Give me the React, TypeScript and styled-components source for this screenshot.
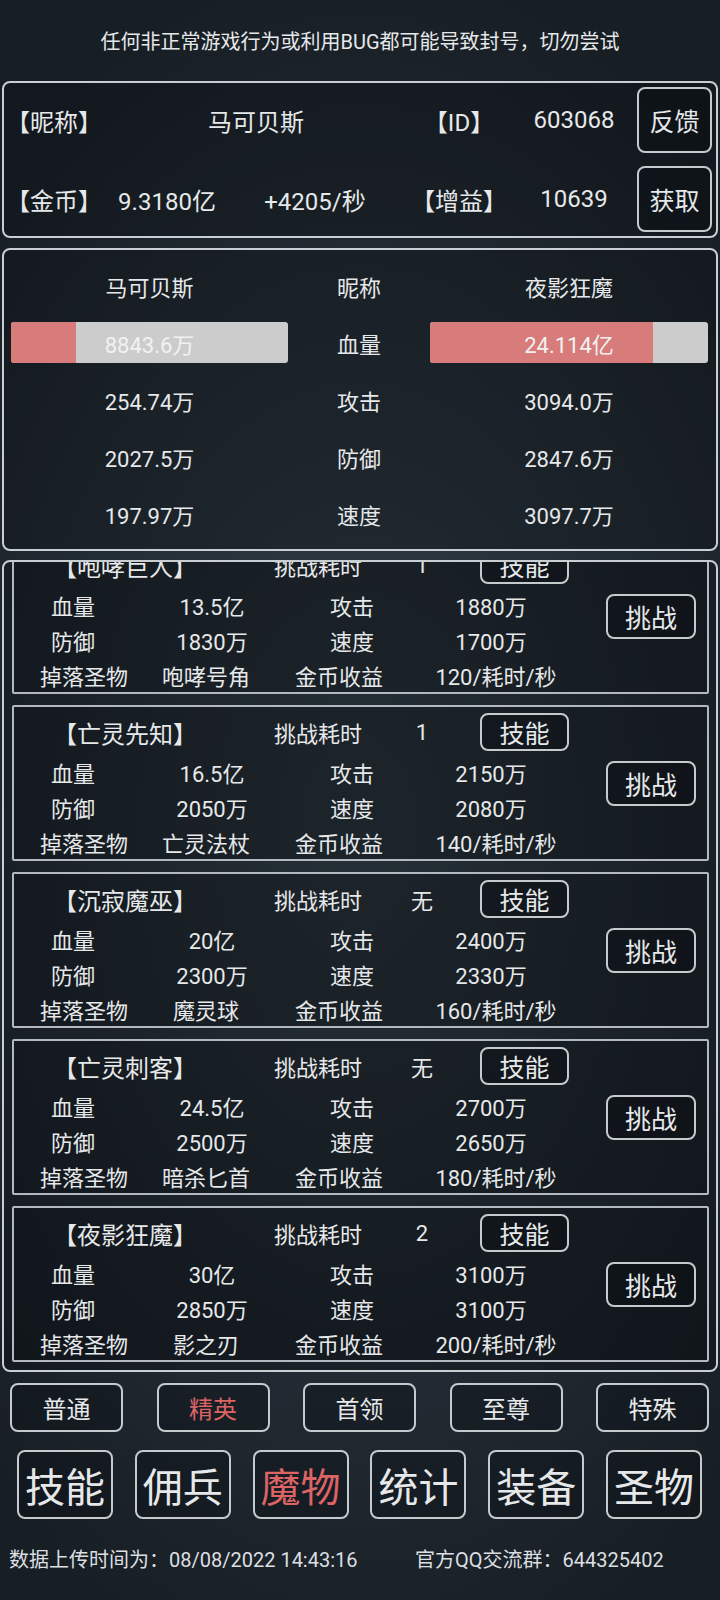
import React, { useLayoutEffect, useRef } from 'react';
import styled, { createGlobalStyle } from 'styled-components';

const GlobalStyle = createGlobalStyle`
  html, body {
    margin: 0;
    padding: 0;
  }
  body {
    background: radial-gradient(ellipse 75% 55% at 50% 52%, #34414b 0%, #252f37 50%, #171e24 100%);
    color: #e6e8ea;
    font-family: Roboto, "Noto Sans CJK SC", sans-serif;
  }
  * {
    box-sizing: border-box;
  }
`;

const Page = styled.div`
  width: 720px;
  height: 1600px;
  padding: 0 2px;
`;

const Notice = styled.div`
  height: 81px;
  padding-top: 28px;
  line-height: 28px;
  font-size: 20px;
  text-align: center;
`;

const Panel = styled.section`
  border: 2px solid #c9ced2;
  border-radius: 8px;
  background: rgba(8, 12, 16, 0.32);
`;

const InfoPanel = styled(Panel)`
  display: grid;
  grid-template-columns: 100px 126px 170px 118px 112px 1fr;
  grid-auto-rows: 66px;
  row-gap: 13px;
  align-items: center;
  padding: 4px 0;
  font-size: 24px;
  text-align: center;
`;

const NameCell = styled.div`
  grid-column: span 2;
  padding-left: 8px;
`;

const Cell = styled.div``;

const OutlineButton = styled.button`
  display: flex;
  align-items: center;
  justify-content: center;
  padding: 0;
  border: 2px solid #c5cacd;
  border-radius: 8px;
  background: rgba(8, 12, 16, 0.35);
  color: ${p => (p.$active ? '#dc6464' : '#e6e8ea')};
  font-family: inherit;
`;

const SideButton = styled(OutlineButton)`
  margin-left: 7px;
  width: 75px;
  height: 66px;
  font-size: 25px;
`;

const BattlePanel = styled(Panel)`
  margin-top: 10px;
  display: grid;
  grid-template-columns: 277px 142px 1fr;
  grid-auto-rows: 57px;
  align-items: center;
  padding: 7px 8px 7px 7px;
  font-size: 22px;
  text-align: center;
`;

const Bar = styled.div`
  position: relative;
  height: 41px;
  border-radius: 3px;
  background: #cccccc;
  overflow: hidden;
  display: flex;
  align-items: center;
  justify-content: center;
`;

const BarFill = styled.div`
  position: absolute;
  left: 0;
  top: 0;
  bottom: 0;
  background: #d77b7b;
`;

const BarText = styled.span`
  position: relative;
  color: #f2f2f2;
`;

const MonsterPanel = styled(Panel)`
  margin-top: 9px;
  height: 812px;
  overflow: hidden;
`;

const ScrollArea = styled.div`
  height: 100%;
  overflow-y: auto;
  scrollbar-width: none;

  &::-webkit-scrollbar {
    display: none;
  }
`;

const MonsterList = styled.div`
  display: flex;
  flex-direction: column;
  gap: 11px;
  padding: 8px 7px 8px 8px;
`;

const Card = styled.div`
  display: flex;
  height: 156px;
  padding-top: 6px;
  border: 2px solid #b3b9be;
  border-radius: 2px;
  background: rgba(8, 12, 16, 0.28);
`;

const CardMain = styled.div`
  width: 558px;
  display: flex;
  flex-direction: column;
`;

const TitleRow = styled.div`
  display: flex;
  align-items: center;
  height: 38px;
  margin-bottom: 3px;
  font-size: 22px;
`;

const MonsterName = styled.div`
  width: 222px;
  text-align: center;
  font-size: 24px;
`;

const TimeLabel = styled.div`
  width: 164px;
  text-align: center;
`;

const TimeValue = styled.div`
  width: 44px;
  text-align: center;
`;

const SkillButton = styled(OutlineButton)`
  margin-left: 36px;
  width: 89px;
  height: 38px;
  font-size: 25px;
`;

const StatRow = styled.div`
  display: grid;
  grid-template-columns: ${p => p.$cols};
  height: 35px;
  align-items: center;
  text-align: center;
  font-size: 22px;
`;

const ChallengeButton = styled(OutlineButton)`
  margin: 48px 0 0 34px;
  width: 90px;
  height: 45px;
  font-size: 26px;
`;

const FilterRow = styled.div`
  margin-top: 11px;
  display: flex;
  justify-content: space-between;
  padding: 0 9px 0 8px;
`;

const FilterButton = styled(OutlineButton)`
  width: 113px;
  height: 49px;
  font-size: 24px;
`;

const NavRow = styled.div`
  margin-top: 18px;
  display: flex;
  justify-content: space-between;
  padding: 0 16px 0 15px;
`;

const NavButton = styled(OutlineButton)`
  width: 96px;
  height: 69px;
  font-size: 40px;
`;

const Footer = styled.div`
  display: grid;
  grid-template-columns: 406px auto;
  padding: 28px 0 0 7px;
  line-height: 26px;
  font-size: 20px;
  color: #dcdfe2;
`;

const STAT_COLS = '118px 160px 120px 158px';
const DROP_COLS = '140px 104px 162px 152px';

const fighters = [
  { label: '血量', left: '8843.6万', right: '24.114亿', leftPct: 23.5, rightPct: 80.2 },
  { label: '攻击', left: '254.74万', right: '3094.0万' },
  { label: '防御', left: '2027.5万', right: '2847.6万' },
  { label: '速度', left: '197.97万', right: '3097.7万' },
];

const monsters = [
  { name: '咆哮巨人', time: '1', hp: '13.5亿', atk: '1880万', def: '1830万', spd: '1700万', drop: '咆哮号角', gold: '120/耗时/秒' },
  { name: '亡灵先知', time: '1', hp: '16.5亿', atk: '2150万', def: '2050万', spd: '2080万', drop: '亡灵法杖', gold: '140/耗时/秒' },
  { name: '沉寂魔巫', time: '无', hp: '20亿', atk: '2400万', def: '2300万', spd: '2330万', drop: '魔灵球', gold: '160/耗时/秒' },
  { name: '亡灵刺客', time: '无', hp: '24.5亿', atk: '2700万', def: '2500万', spd: '2650万', drop: '暗杀匕首', gold: '180/耗时/秒' },
  { name: '夜影狂魔', time: '2', hp: '30亿', atk: '3100万', def: '2850万', spd: '3100万', drop: '影之刃', gold: '200/耗时/秒' },
];

const filters = ['普通', '精英', '首领', '至尊', '特殊'];
const navItems = ['技能', '佣兵', '魔物', '统计', '装备', '圣物'];

const HpBar = ({ pct, value }) => (
  <Bar>
    <BarFill style={{ width: `${pct}%` }} />
    <BarText>{value}</BarText>
  </Bar>
);

export default function App() {
  const scrollRef = useRef(null);

  // the monster list is shown scrolled to its end
  useLayoutEffect(() => {
    if (scrollRef.current) {
      scrollRef.current.scrollTop = scrollRef.current.scrollHeight;
    }
  }, []);

  return (
    <Page>
      <GlobalStyle />
      <Notice>任何非正常游戏行为或利用BUG都可能导致封号，切勿尝试</Notice>

      <InfoPanel>
        <Cell>【昵称】</Cell>
        <NameCell>马可贝斯</NameCell>
        <Cell>【ID】</Cell>
        <Cell>603068</Cell>
        <SideButton>反馈</SideButton>
        <Cell>【金币】</Cell>
        <Cell>9.3180亿</Cell>
        <Cell>+4205/秒</Cell>
        <Cell>【增益】</Cell>
        <Cell>10639</Cell>
        <SideButton>获取</SideButton>
      </InfoPanel>

      <BattlePanel>
        <Cell>马可贝斯</Cell>
        <Cell>昵称</Cell>
        <Cell>夜影狂魔</Cell>
        {fighters.map(row => (
          <React.Fragment key={row.label}>
            {row.leftPct !== undefined ? <HpBar pct={row.leftPct} value={row.left} /> : <Cell>{row.left}</Cell>}
            <Cell>{row.label}</Cell>
            {row.rightPct !== undefined ? <HpBar pct={row.rightPct} value={row.right} /> : <Cell>{row.right}</Cell>}
          </React.Fragment>
        ))}
      </BattlePanel>

      <MonsterPanel>
        <ScrollArea ref={scrollRef}>
          <MonsterList>
            {monsters.map(m => (
              <Card key={m.name}>
                <CardMain>
                  <TitleRow>
                    <MonsterName>【{m.name}】</MonsterName>
                    <TimeLabel>挑战耗时</TimeLabel>
                    <TimeValue>{m.time}</TimeValue>
                    <SkillButton>技能</SkillButton>
                  </TitleRow>
                  <StatRow $cols={STAT_COLS}>
                    <span>血量</span>
                    <span>{m.hp}</span>
                    <span>攻击</span>
                    <span>{m.atk}</span>
                  </StatRow>
                  <StatRow $cols={STAT_COLS}>
                    <span>防御</span>
                    <span>{m.def}</span>
                    <span>速度</span>
                    <span>{m.spd}</span>
                  </StatRow>
                  <StatRow $cols={DROP_COLS}>
                    <span>掉落圣物</span>
                    <span>{m.drop}</span>
                    <span>金币收益</span>
                    <span>{m.gold}</span>
                  </StatRow>
                </CardMain>
                <ChallengeButton>挑战</ChallengeButton>
              </Card>
            ))}
          </MonsterList>
        </ScrollArea>
      </MonsterPanel>

      <FilterRow>
        {filters.map(f => (
          <FilterButton key={f} $active={f === '精英'}>{f}</FilterButton>
        ))}
      </FilterRow>

      <NavRow>
        {navItems.map(n => (
          <NavButton key={n} $active={n === '魔物'}>{n}</NavButton>
        ))}
      </NavRow>

      <Footer>
        <span>数据上传时间为：08/08/2022 14:43:16</span>
        <span>官方QQ交流群：644325402</span>
      </Footer>
    </Page>
  );
}
